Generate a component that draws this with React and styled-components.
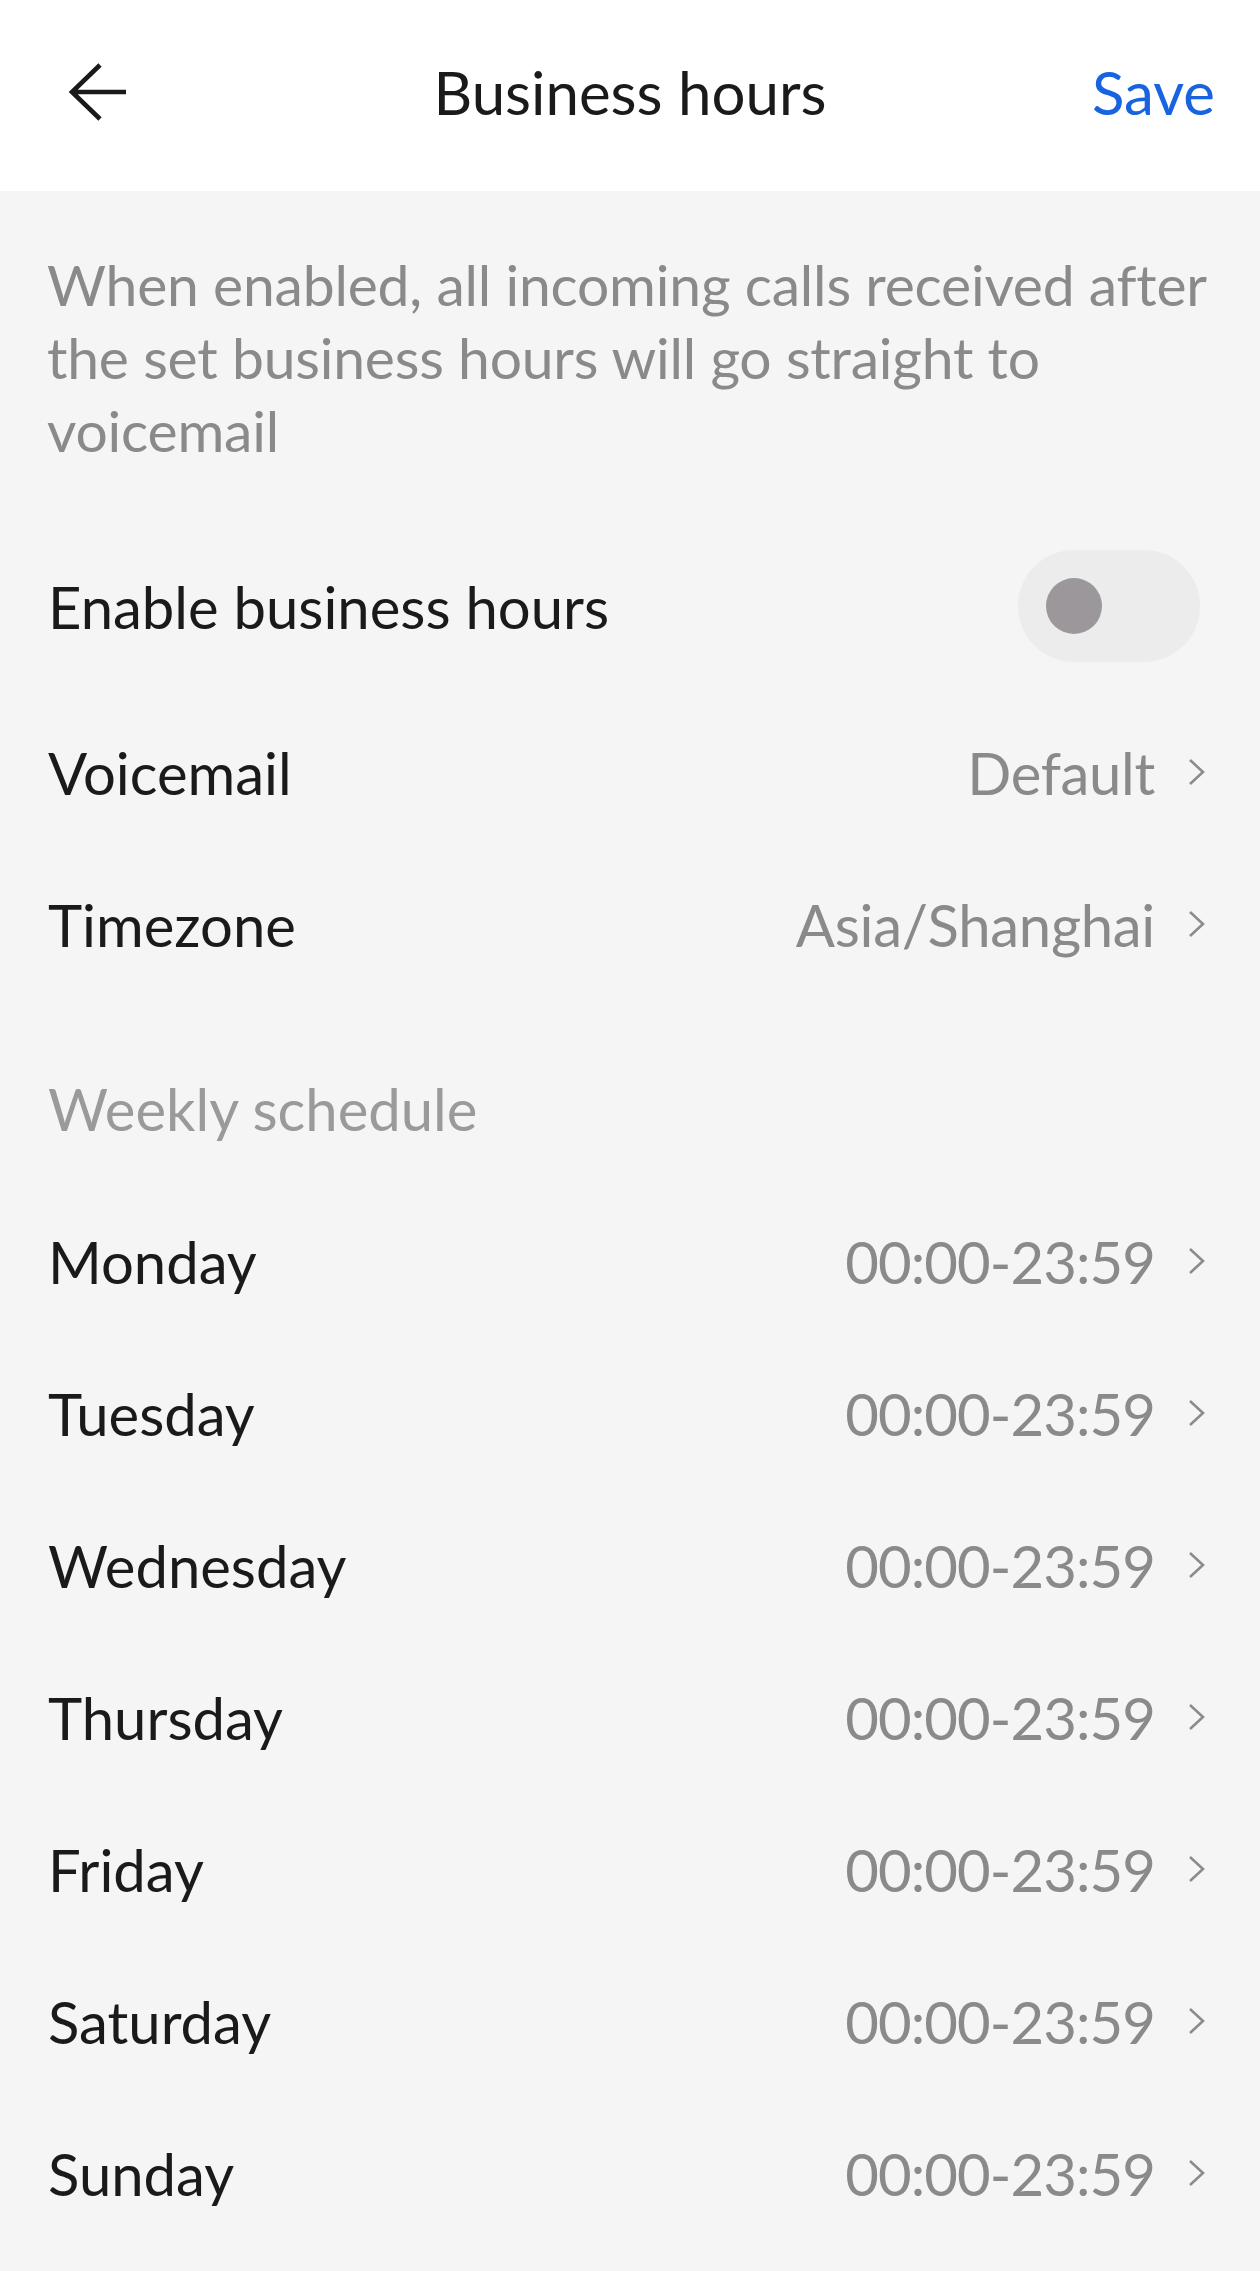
import React, { useState } from "react";
import styled, { createGlobalStyle } from "styled-components";

const GlobalStyle = createGlobalStyle`
  html, body {
    margin: 0;
    padding: 0;
    background: #f5f5f5;
  }
  body {
    font-family: Lato, "Noto Sans", "Liberation Sans", sans-serif;
    -webkit-font-smoothing: antialiased;
  }
`;

const Page = styled.div`
  min-height: 2271px;
  background: #f5f5f5;
  color: #1a1a1a;
  font-size: 58px;
`;

const Header = styled.header`
  height: 191px;
  background: #ffffff;
  display: grid;
  grid-template-columns: 1fr auto 1fr;
  align-items: center;
  padding: 0 45px 8px 45px;
  box-sizing: border-box;
`;

const BackButton = styled.button`
  justify-self: start;
  margin-left: 23px;
  padding: 0;
  border: none;
  background: none;
  display: flex;
  align-items: center;
  cursor: pointer;
`;

const Title = styled.h1`
  margin: 0;
  font-size: 60px;
  font-weight: 400;
  color: #1a1a1a;
  line-height: 1;
`;

const SaveButton = styled.button`
  justify-self: end;
  padding: 0;
  border: none;
  background: none;
  font-family: inherit;
  font-size: 60px;
  color: #1763e0;
  line-height: 1;
  cursor: pointer;
`;

const Description = styled.p`
  margin: 0;
  padding: 57px 38px 63px 47px;
  color: #8a8a8a;
  font-size: 57px;
  letter-spacing: -0.2px;
  line-height: 73px;
`;

const Row = styled.div`
  height: 152px;
  display: flex;
  align-items: center;
  justify-content: space-between;
  padding: 0 55px 0 48px;
  margin-bottom: ${({ gap }) => gap || 0}px;
  box-sizing: border-box;
`;

const Label = styled.span`
  color: #1a1a1a;
`;

const Value = styled.span`
  display: flex;
  align-items: center;
  gap: 33px;
  color: #8a8a8a;
  letter-spacing: ${({ tight }) => (tight ? "-0.9px" : "-0.3px")};
`;

const SectionTitle = styled.div`
  padding: 72px 48px 40px 48px;
  line-height: 73px;
  color: #9a9a9a;
`;

const Track = styled.button`
  width: 182px;
  height: 112px;
  margin-right: 5px;
  border: none;
  border-radius: 56px;
  background: ${({ on }) => (on ? "#1763e0" : "#ececec")};
  display: flex;
  align-items: center;
  justify-content: ${({ on }) => (on ? "flex-end" : "flex-start")};
  padding: 0 28px;
  box-sizing: border-box;
  cursor: pointer;
`;

const Knob = styled.span`
  width: 56px;
  height: 56px;
  border-radius: 50%;
  background: ${({ on }) => (on ? "#ffffff" : "#9b979a")};
`;

const BackArrow = () => (
  <svg width="60" height="60" viewBox="0 0 60 60" fill="none">
    <path d="M58 30H4M32 3L4 30l28 27" stroke="#1a1a1a" strokeWidth="4.6" />
  </svg>
);

const Chevron = () => (
  <svg width="17" height="28" viewBox="0 0 17 28" fill="none">
    <path d="M2 2l13 12L2 26" stroke="#8c8c8c" strokeWidth="2.6" />
  </svg>
);

const days = [
  "Monday",
  "Tuesday",
  "Wednesday",
  "Thursday",
  "Friday",
  "Saturday",
  "Sunday",
];

const App = () => {
  const [enabled, setEnabled] = useState(false);

  return (
    <Page>
      <GlobalStyle />
      <Header>
        <BackButton aria-label="Back">
          <BackArrow />
        </BackButton>
        <Title>Business hours</Title>
        <SaveButton>Save</SaveButton>
      </Header>

      <Description>
        When enabled, all incoming calls received after the set business hours
        will go straight to voicemail
      </Description>

      <Row gap={14}>
        <Label>Enable business hours</Label>
        <Track on={enabled} onClick={() => setEnabled(!enabled)}>
          <Knob on={enabled} />
        </Track>
      </Row>
      <Row>
        <Label>Voicemail</Label>
        <Value>
          Default <Chevron />
        </Value>
      </Row>
      <Row>
        <Label>Timezone</Label>
        <Value>
          Asia/Shanghai <Chevron />
        </Value>
      </Row>

      <SectionTitle>Weekly schedule</SectionTitle>

      {days.map((day) => (
        <Row key={day}>
          <Label>{day}</Label>
          <Value tight>
            00:00-23:59 <Chevron />
          </Value>
        </Row>
      ))}
    </Page>
  );
};

export default App;
